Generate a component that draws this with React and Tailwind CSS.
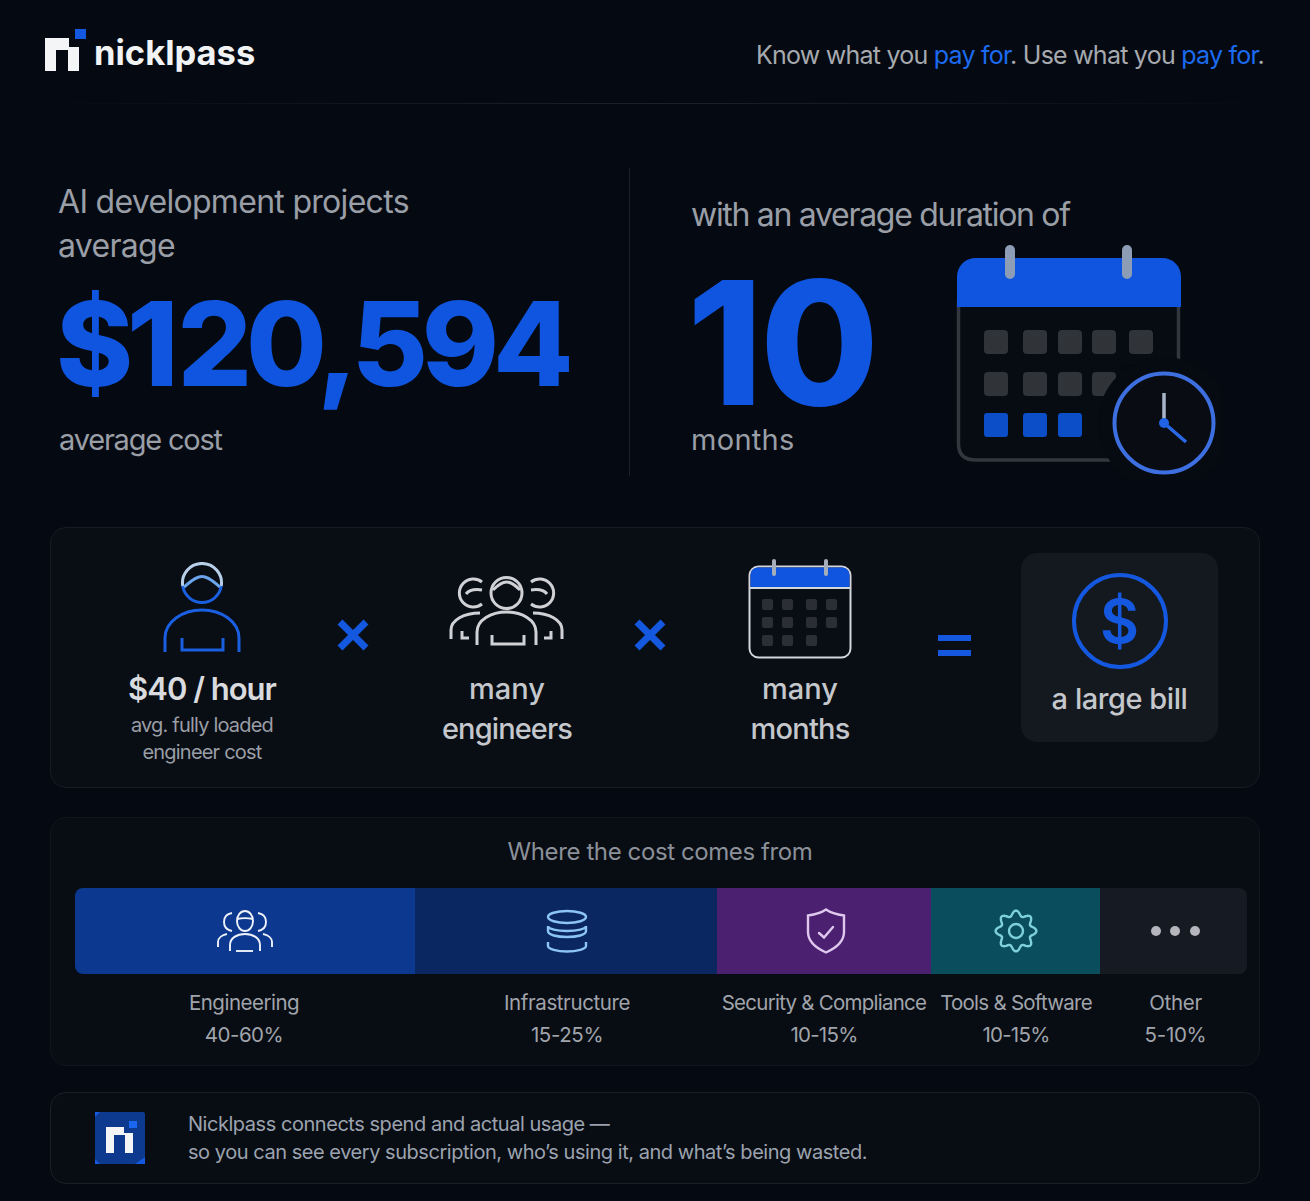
import React from "react";

const gearPath = () => {
    let d = "";
    for (let i = 0; i <= 160; i++) {
        const a = (i / 160) * Math.PI * 2;
        const r = 17.8 + 2.6 * Math.cos(8 * a);
        const x = 22 + r * Math.cos(a);
        const y = 22 + r * Math.sin(a);
        d += (i === 0 ? "M" : "L") + x.toFixed(2) + " " + y.toFixed(2) + " ";
    }
    return d + "Z";
};

function BigLogo() {
    return (
        <svg width="42" height="43" viewBox="0 0 42 43">
            <path d="M0 9H24V18H34V42H23V21H11V42H0Z" fill="#f4f5f6" />
            <rect x="30" y="0" width="11" height="10" fill="#1558e0" />
        </svg>
    );
}

function SmallLogo() {
    return (
        <svg width="50" height="52" viewBox="0 0 50 52" className="shrink-0">
            <rect width="50" height="52" rx="2" fill="#0d3a8f" />
            <path d="M0 5L5 0H0Z" fill="#1558e0" />
            <path d="M50 52H40L50 45Z" fill="#1558e0" />
            <path d="M0 52H5L0 47Z" fill="#1558e0" />
            <path d="M11 15H29V21H38V41H30V23H19V41H11Z" fill="#f4f5f6" />
            <rect x="34" y="9" width="8" height="7" fill="#1a68f0" />
        </svg>
    );
}

function BigCalendar() {
    const xs = [34, 73, 108, 142, 179];
    const ys = [90, 132, 173];
    return (
        <svg width="270" height="240" viewBox="0 0 270 240" className="shrink-0">
            <path d="M8.500 60V204C8.500 214 14 220 26 220H170V124H229V60Z" fill="#070b12" />
            <path d="M8.500 60V204C8.500 214 14 220 26 220H180" fill="none" stroke="#33363d" strokeWidth="3.500" />
            <path d="M228.500 60V140" fill="none" stroke="#33363d" strokeWidth="3.500" />
            <path d="M7 67V37C7 26 15 18 26 18H212C223 18 231 26 231 37V67Z" fill="#0f55e0" />
            <rect x="55" y="5" width="10" height="34" rx="5" fill="#8c9db5" />
            <rect x="172" y="5" width="10" height="34" rx="5" fill="#8c9db5" />
            {ys.slice(0, 2).map((y) =>
                xs.map((x) => <rect key={x + "-" + y} x={x} y={y} width="24" height="24" rx="4" fill="#303338" />)
            )}
            {xs.slice(0, 3).map((x) => <rect key={x} x={x} y={ys[2]} width="24" height="24" rx="3" fill="#0c4dc8" />)}
            <circle cx="214" cy="183" r="66" fill="#060a11" />
            <circle cx="214" cy="183" r="49.500" fill="#090d13" stroke="#3d6fe0" strokeWidth="4" />
            <path d="M214 153V183" stroke="#a9b4c8" strokeWidth="3.500" />
            <path d="M214 183L236 202" stroke="#2a68e6" strokeWidth="3.500" />
            <circle cx="214" cy="183" r="5" fill="#1f62e6" />
        </svg>
    );
}

function PersonIcon() {
    return (
        <svg width="80" height="92" viewBox="0 0 80 92" fill="none" strokeWidth="3">
            <path d="M20.740 24A19.500 19.500 0 0 0 59.260 24" stroke="#1a5fe0" />
            <path d="M20.740 24A19.500 19.500 0 1 1 59.260 24" stroke="#b8cfe9" />
            <path d="M22 25C27 21 33 14.500 40 14.500C47 14.500 53 21 58 25" stroke="#6ba6ec" />
            <path d="M3 90V76C3 60 20 48 40 48C60 48 77 60 77 76V90" stroke="#1a5fe0" />
            <path d="M20 76V88H61V76" stroke="#1a5fe0" />
        </svg>
    );
}

function TeamIcon() {
    return (
        <svg width="116" height="78" viewBox="0 0 116 78" fill="none" stroke="#cfd1d5" strokeWidth="3">
            <circle cx="57.500" cy="23" r="15.500" />
            <path d="M44 20C49 15 53 12 57.500 12C62 12 66 15 71 20" />
            <path d="M33 12A14 14 0 1 0 33 34" />
            <path d="M17 24C20 20 26 19 33 20" />
            <path d="M82 12A14 14 0 1 1 82 34" />
            <path d="M98 24C95 20 89 19 82 20" />
            <path d="M28 75V62C28 50 42 42 57.500 42C73 42 87 50 87 62V75" />
            <path d="M2 69V60C2 50 15 43 31 43" />
            <path d="M113 69V60C113 50 100 43 84 43" />
            <path d="M13 61V68H20" />
            <path d="M102 61V68H95" />
            <path d="M43 65V74H75V65" />
        </svg>
    );
}

function MiniTeamIcon() {
    return (
        <svg width="58" height="44" viewBox="0 0 58 44" fill="none" stroke="#eef2fa" strokeWidth="1.900">
            <ellipse cx="29" cy="12" rx="8" ry="10" />
            <path d="M21 10C25 9 33 9 37 10" />
            <path d="M16 4C10 5 8 9 8 13C8 18 11 21 16 22" />
            <path d="M42 4C48 5 50 9 50 13C50 18 47 21 42 22" />
            <path d="M14 42V36C14 29 21 25 29 25C37 25 44 29 44 36V42" />
            <path d="M2 38V33C2 29 6 26 11 25" />
            <path d="M56 38V33C56 29 52 26 47 25" />
            <path d="M20 42H37" />
        </svg>
    );
}

function SmallCalendar() {
    const xs = [14, 34, 58, 78];
    const ys = [42, 60, 78];
    return (
        <svg width="104" height="103" viewBox="0 0 104 103" fill="none" className="block">
            <rect x="1.500" y="9.500" width="101" height="91" rx="9" fill="#090d14" stroke="#d3d6da" strokeWidth="2" />
            <path d="M2.500 30V18C2.500 13 6 10.500 11 10.500H93C98 10.500 101.500 13 101.500 18V30Z" fill="#1055df" />
            <path d="M2 31H102" stroke="#d3d6da" strokeWidth="2" />
            <rect x="24" y="2" width="4" height="17" rx="2" fill="#a5adba" />
            <rect x="76" y="2" width="4" height="17" rx="2" fill="#a5adba" />
            {ys.map((y, r) =>
                xs.slice(0, r === 2 ? 3 : 4).map((x) => <rect key={x + "-" + y} x={x} y={y} width="11" height="11" rx="2" fill="#2b2e34" />)
            )}
        </svg>
    );
}

function Times() {
    return (
        <svg width="34" height="34" viewBox="0 0 34 34" className="block">
            <path d="M4 4L30 30M30 4L4 30" stroke="#1558e0" strokeWidth="7" />
        </svg>
    );
}

function DatabaseIcon() {
    return (
        <svg width="42" height="44" viewBox="0 0 42 44" fill="none" stroke="#8cc4f4" strokeWidth="2.400">
            <ellipse cx="21" cy="8" rx="19" ry="6" />
            <path d="M2 17V22C2 26 11 28 21 28S40 26 40 22V17C40 20 31 22 21 22S2 20 2 17Z" />
            <path d="M2 33V37C2 40 11 42.500 21 42.500S40 40 40 37V33" />
        </svg>
    );
}

function ShieldIcon() {
    return (
        <svg width="42" height="46" viewBox="0 0 42 46" fill="none" stroke="#dfc8ee" strokeWidth="2.400">
            <path d="M21 1.500C26 5 32 6.500 39 7.500V24C39 33 31 40 21 44.500C11 40 3 33 3 24V7.500C10 6.500 16 5 21 1.500Z" />
            <path d="M14 25L19 29.500L28 19" strokeLinecap="round" />
        </svg>
    );
}

function GearIcon() {
    return (
        <svg width="44" height="44" viewBox="0 0 44 44" fill="none" stroke="#7ed0dc" strokeWidth="2.400">
            <path d={gearPath()} />
            <circle cx="22" cy="22" r="7" />
        </svg>
    );
}

function Dots() {
    return (
        <div className="flex items-center gap-[9.500px]">
            <div className="size-[10px] rounded-full bg-[#b4b6bb]" />
            <div className="size-[10px] rounded-full bg-[#b4b6bb]" />
            <div className="size-[10px] rounded-full bg-[#b4b6bb]" />
        </div>
    );
}

const segments = [
    { name: "Engineering", pct: "40-60%", width: "w-[340px]", bg: "bg-[#0c388f] rounded-l-lg", label: "tracking-[-0.5px] pr-[2px]", icon: <MiniTeamIcon /> },
    { name: "Infrastructure", pct: "15-25%", width: "w-[302px]", bg: "bg-[#0a2761] pl-[2px]", label: "tracking-[-0.4px] pl-[2px]", icon: <DatabaseIcon /> },
    { name: "Security & Compliance", pct: "10-15%", width: "w-[214px]", bg: "bg-[#4c2070] pl-[3px]", label: "tracking-[-0.75px]", icon: <ShieldIcon /> },
    { name: "Tools & Software", pct: "10-15%", width: "w-[169px]", bg: "bg-[#0a4d5c]", label: "tracking-[-0.75px] pl-[1px]", icon: <GearIcon /> },
    { name: "Other", pct: "5-10%", width: "w-[147px]", bg: "bg-[#161a22] rounded-r-lg pl-[3px]", label: "tracking-[-0.3px] pl-[4px]", icon: <Dots /> },
];

export default function App() {
    return (
        <div className="w-[1310px] h-[1201px] overflow-hidden bg-[#050a12] font-['Inter',sans-serif]">
            {/* header */}
            <div className="flex items-center justify-between h-[103px] pl-[45px] pr-[46px]">
                <div className="flex items-start">
                    <BigLogo />
                    <span className="ml-[7px] mt-[2px] text-[34.500px] leading-[44px] font-bold text-[#f2f3f5]">nicklpass</span>
                </div>
                <p className="mt-[7px] text-[25px] leading-8 tracking-[-0.76px] text-[#a6a9ae]">
                    Know what you <span className="text-[#1c6af0]">pay for</span>. Use what you <span className="text-[#1c6af0]">pay for</span>.
                </p>
            </div>
            <div className="mx-[30px] h-px bg-gradient-to-r from-transparent via-[#1b212b] to-transparent" />

            {/* hero numbers */}
            <div className="flex mt-[64px] h-[308px]">
                <div className="w-[630px] pl-[59px] pt-[12px] border-r border-[#1b2029]">
                    <p className="-ml-[1px] text-[32px] leading-[44px] tracking-[-0.7px] text-[#9a9ea6]">AI development projects<br />average</p>
                    <p className="mt-[16px] -ml-[3px] text-[117px] leading-[120px] font-extrabold text-[#0f55e0] tracking-[-6.200px] whitespace-nowrap">$<span className="mr-[5px]">1</span>20,594</p>
                    <p className="mt-[14px] text-[29px] leading-[44px] tracking-[-1.200px] text-[#9a9ea6]">average cost</p>
                </div>
                <div className="flex pl-[62px]">
                    <div className="w-[258px] pt-[25px] whitespace-nowrap">
                        <p className="-ml-[1px] text-[32px] leading-[44px] tracking-[-1.300px] text-[#9a9ea6]">with an average duration of</p>
                        <p className="mt-[35px] -ml-[5px] text-[172px] leading-[140px] font-extrabold text-[#0f55e0] tracking-[-3px]">10</p>
                        <p className="mt-[6px] -ml-[1px] text-[29px] leading-[44px] tracking-[0.3px] text-[#9a9ea6]">months</p>
                    </div>
                    <div className="mt-[72px]">
                        <BigCalendar />
                    </div>
                </div>
            </div>

            {/* formula */}
            <div className="flex items-start mx-[50px] mt-[51px] h-[261px] rounded-2xl border border-[#161b24] bg-[#090d14] pl-[51px]">
                <div className="flex flex-col items-center w-[200px] mt-[34px] text-center">
                    <PersonIcon />
                    <p className="mt-[15px] text-[31px] leading-[40px] font-semibold tracking-[-1px] text-[#d9dbde]">$40 / hour</p>
                    <p className="mt-[3px] text-[20px] leading-[27px] tracking-[-0.8px] text-[#9a9ea6]">avg. fully loaded<br />engineer cost</p>
                </div>
                <div className="ml-[34px] mt-[90px]"><Times /></div>
                <div className="flex flex-col items-center w-[200px] ml-[37px] mt-[42px] text-center">
                    <TeamIcon />
                    <p className="mt-[21px] text-[29px] leading-[40px] font-medium text-[#c4c7cc]"><span>many</span><br /><span className="tracking-[-0.9px]">engineers</span></p>
                </div>
                <div className="ml-[26px] mt-[90px]"><Times /></div>
                <div className="flex flex-col items-center w-[200px] ml-[33px] mt-[29px] text-center">
                    <SmallCalendar />
                    <p className="mt-[9px] text-[29px] leading-[40px] font-medium text-[#c4c7cc]"><span>many</span><br /><span className="tracking-[-0.75px]">months</span></p>
                </div>
                <div className="flex flex-col gap-[9px] ml-[38px] mt-[107px]">
                    <div className="w-[33px] h-[6px] bg-[#1558e0]" />
                    <div className="w-[33px] h-[6px] bg-[#1558e0]" />
                </div>
                <div className="flex flex-col items-center w-[197px] h-[189px] ml-[50px] mt-[25px] rounded-2xl bg-[#14181f]">
                    <div className="flex items-center justify-center size-[96px] mt-[20px] rounded-full border-[4px] border-[#1558e0] text-[60px] font-semibold text-[#1558e0]">$</div>
                    <p className="mt-[10px] text-[29px] leading-[40px] font-medium text-[#c4c7cc] tracking-[-0.45px]">a large bill</p>
                </div>
            </div>

            {/* cost breakdown */}
            <div className="mx-[50px] mt-[29px] h-[249px] rounded-2xl border border-[#11161e] bg-[#080c13] pt-[18px] pl-[24px]">
                <p className="text-center text-[24px] leading-8 pr-[14px] tracking-[-0.4px] text-[#8b9099]">Where the cost comes from</p>
                <div className="flex mt-[20px]">
                    {segments.map((s) => (
                        <div key={s.name} className={s.width}>
                            <div className={"flex items-center justify-center h-[86px] " + s.bg}>{s.icon}</div>
                            <p className={"mt-[13px] text-center text-[20.500px] leading-8 whitespace-nowrap text-[#a0a4ab] " + s.label}>{s.name}<br />{s.pct}</p>
                        </div>
                    ))}
                </div>
            </div>

            {/* footer note */}
            <div className="flex items-center mx-[50px] mt-[26px] h-[92px] rounded-2xl border border-[#1a1f28] bg-[#080c13] pl-[44px]">
                <SmallLogo />
                <p className="ml-[43px] text-[20px] leading-[28px] tracking-[-0.46px] text-[#9ca3af]">
                    Nicklpass connects spend and actual usage —<br />so you can see every subscription, who’s using it, and what’s being wasted.
                </p>
            </div>
        </div>
    );
}
